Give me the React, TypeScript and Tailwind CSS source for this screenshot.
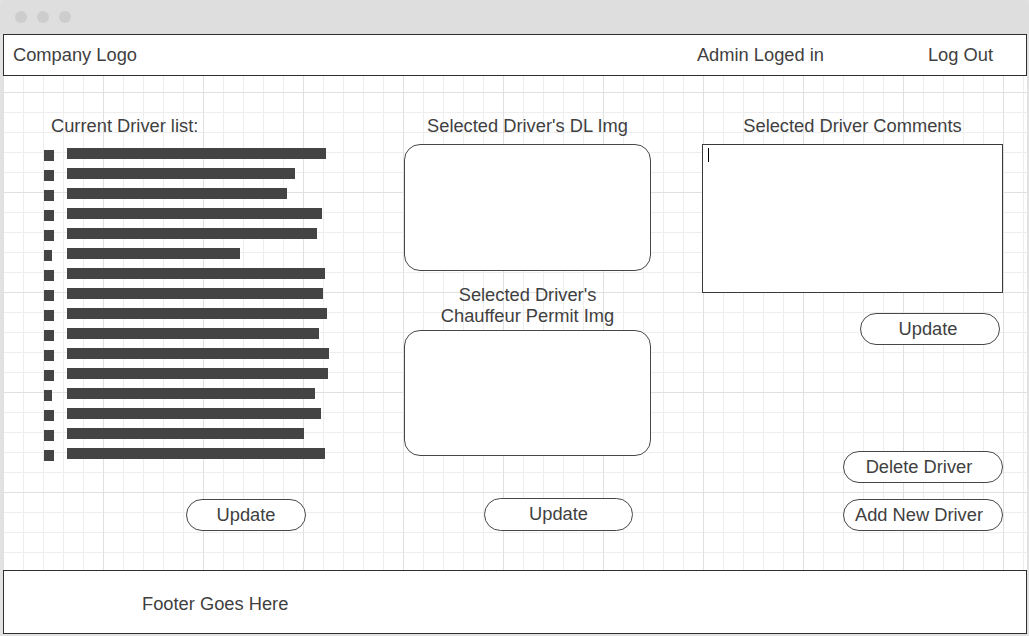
import React from 'react';

const bars = [
  { w: 259, b: 10 },
  { w: 228, b: 10 },
  { w: 220, b: 10 },
  { w: 255, b: 10 },
  { w: 250, b: 10 },
  { w: 173, b: 8 },
  { w: 258, b: 10 },
  { w: 256, b: 10 },
  { w: 260, b: 10 },
  { w: 252, b: 10 },
  { w: 262, b: 10 },
  { w: 261, b: 10 },
  { w: 248, b: 8 },
  { w: 254, b: 10 },
  { w: 237, b: 10 },
  { w: 258, b: 10 },
];

const PillButton: React.FC<{ label: string; className?: string }> = ({ label, className }) => (
  <button
    className={
      'h-[32px] rounded-full border border-[#474747] bg-white text-[18.3px] leading-none text-[#3f3f3f] flex items-center justify-center ' +
      (className ?? '')
    }
  >
    {label}
  </button>
);

const App: React.FC = () => {
  return (
    <div className="w-[1029px] h-[636px] bg-[#e2e2e2] flex flex-col overflow-hidden font-['Liberation_Sans',Arial,sans-serif] text-[#3f3f3f]">
      {/* window chrome */}
      <div className="h-[34px] shrink-0 bg-[#dedede] rounded-t-[6px] flex items-center gap-[10px] pl-[15px] pb-[1px]">
        <span className="w-[12px] h-[12px] rounded-full bg-[#cdcdcd]" />
        <span className="w-[12px] h-[12px] rounded-full bg-[#cdcdcd]" />
        <span className="w-[12px] h-[12px] rounded-full bg-[#cdcdcd]" />
      </div>

      <div className="flex-1 ml-[3px] mr-[2px] mb-[2px] flex flex-col bg-white bg-[linear-gradient(to_right,#e0e0e0_1px,transparent_1px),linear-gradient(to_bottom,#e0e0e0_1px,transparent_1px),linear-gradient(to_right,#eeeeee_1px,transparent_1px),linear-gradient(to_bottom,#eeeeee_1px,transparent_1px)] bg-[size:100px_100px,100px_100px,20px_20px,20px_20px] bg-[position:0px_0px,0px_58px,0px_0px,0px_18px]">
        {/* header */}
        <header className="h-[42px] shrink-0 bg-white border border-[#2e2e2e] flex items-center pl-[9px] pr-[33px] text-[18.3px]">
          <span>Company Logo</span>
          <span className="ml-auto">Admin Loged in</span>
          <span className="ml-[104px]">Log Out</span>
        </header>

        {/* main */}
        <main className="flex-1 flex pl-[41px] pt-[39px] text-[18.3px] leading-[21px]">
          {/* driver list */}
          <section className="w-[360px] flex flex-col">
            <h2 className="ml-[7px]">Current Driver list:</h2>
            <ul className="mt-[12px] flex flex-col">
              {bars.map((r, i) => (
                <li key={i} className="h-[20px] flex items-start">
                  <span className="w-[10px] flex">
                    <span className="mt-[2px] h-[11px] bg-[#444444]" style={{ width: r.b }} />
                  </span>
                  <span className="ml-[13px] h-[11px] bg-[#444444]" style={{ width: r.w }} />
                </li>
              ))}
            </ul>
            <PillButton label="Update" className="mt-[31px] ml-[142px] w-[120px]" />
          </section>

          {/* images */}
          <section className="w-[247px] flex flex-col">
            <h2 className="text-center">Selected Driver's DL Img</h2>
            <div className="mt-[8px] h-[127px] rounded-[16px] border border-[#474747] bg-white" />
            <p className="mt-[13px] text-center">
              Selected Driver's
              <br />
              Chauffeur Permit Img
            </p>
            <div className="mt-[4px] h-[126px] rounded-[16px] border border-[#474747] bg-white" />
            <PillButton label="Update" className="mt-[42px] ml-[80px] w-[149px] h-[33px]" />
          </section>

          {/* comments */}
          <section className="ml-[51px] w-[301px] flex flex-col">
            <h2 className="text-center">Selected Driver Comments</h2>
            <div className="mt-[8px] h-[149px] border border-[#3a3a3a] bg-white pl-[5px] pt-[3px]">
              <span className="block w-px h-[14px] bg-black" />
            </div>
            <PillButton label="Update" className="mt-[20px] ml-[158px] w-[140px] pr-[4px]" />
            <PillButton label="Delete Driver" className="mt-[106px] ml-[141px] w-[160px] pr-[8px]" />
            <PillButton label="Add New Driver" className="mt-[16px] ml-[141px] w-[160px] pr-[8px]" />
          </section>
        </main>

        {/* footer */}
        <footer className="h-[64px] shrink-0 bg-white border border-[#2e2e2e] flex items-center pl-[138px] pt-[4px] text-[18.3px]">
          Footer Goes Here
        </footer>
      </div>
    </div>
  );
};

export default App;
